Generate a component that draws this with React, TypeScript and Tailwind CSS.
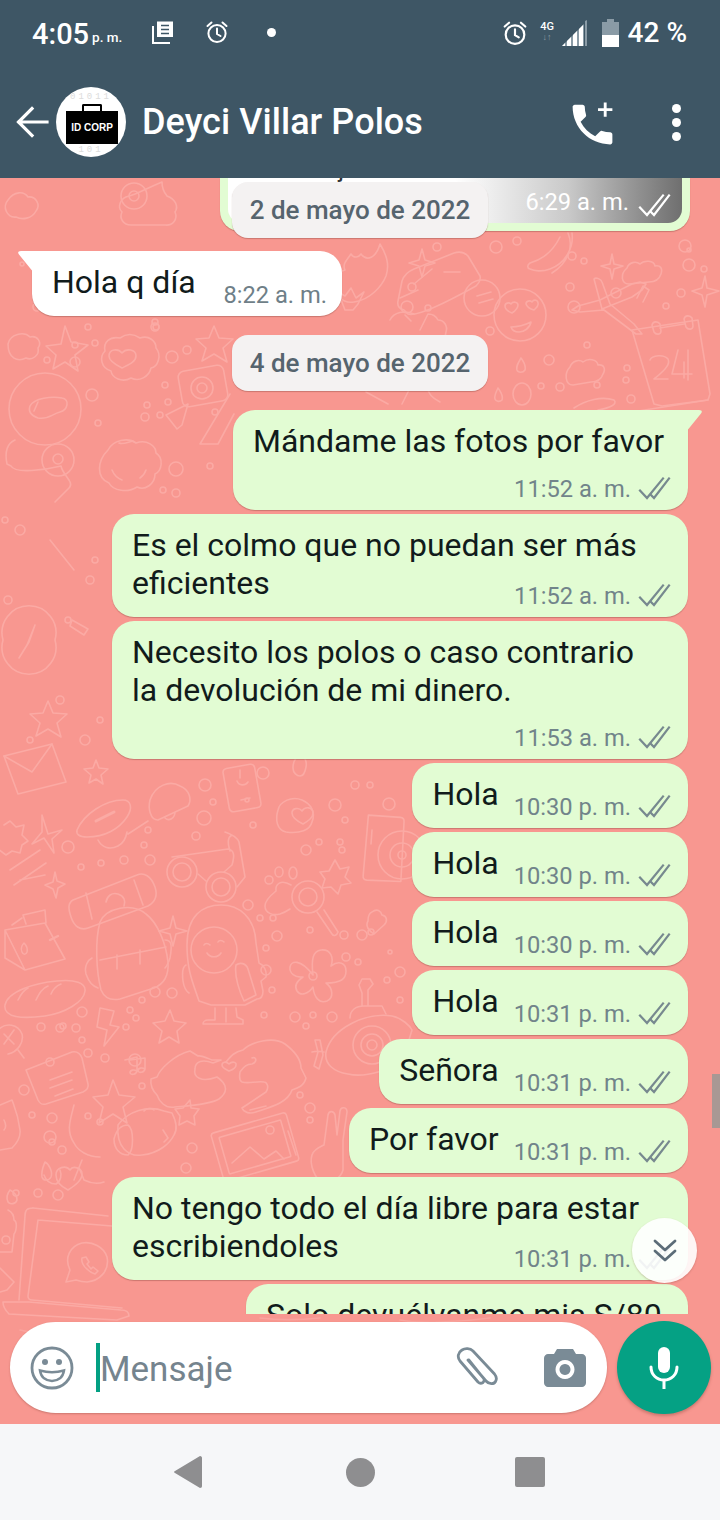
import React from "react";

const dots: [number, number, number][] = [
  [205,785,6],[213,802,3],[204,818,7],[247,800,2],[263,773,6],[253,825,3],[68,847,6],[81,867,3],[101,863,3],[124,860,4],[150,860,5],[148,830,3],[144,845,3],[196,836,4],
  [248,905,5],[260,918,3],[273,918,3],[277,936,5],[310,930,3],[266,948,3],[266,970,5],[272,990,3],[264,1015,3],[295,1017,5],[313,1015,3],[332,1017,5],[306,1026,3],[335,805,6],[370,785,3],[355,785,4],[389,804,6],[345,820,3],[342,850,3],[306,850,5],[319,842,3],[340,842,3],
  [344,935,4],[362,935,5],[371,932,3],[346,957,4],[358,962,3],[390,952,2],[400,972,5],[387,980,3],[400,1000,3],[130,1010,3],[126,1027,3],[142,1000,3],[136,1018,3],[155,992,5],[172,993,5],[82,1012,5],[82,1040,3],[63,1026,3],[41,1027,4],[60,1028,4],[76,1028,4],[50,1062,4],[24,1090,5],[105,1058,4],[88,1053,4],
  [135,1060,6],[142,1086,3],[88,1116,3],[32,1115,3],[52,1118,5],[50,1137,6],[62,1150,4],[300,1095,3],[310,1108,5],[310,1120,3],[192,1148,5],[186,1168,5],[52,1142,3],[100,1122,3],
  [38,1193,4],[58,1195,5],[16,1193,3],
  [22,264,2],[37,307,4],[75,362,5],[95,343,3],[47,360,3],[75,345,3],[88,327,3],[155,327,4],[172,357,6],[187,350,4],[155,322,3],[156,327,3],[92,395,6],[165,385,3],[147,405,3],[168,402,3],[145,417,4],[160,415,3],[98,423,3],[215,412,3],[176,469,7],[210,466,3],[163,490,3],[176,493,4],
  [437,247,4],[496,247,6],[517,241,4],[412,287,4],[407,307,6],[428,308,3],[572,256,4],[584,261,3],[685,246,6],[689,250,2],[689,265,6],[704,269,3],[570,287,4],[574,307,6],[616,293,5],[681,293,4],[666,306,3],[587,345,3],[549,360,5],[627,368,3],[541,386,3],[597,385,3],[626,380,3],[631,399,4],[560,387,4],[490,331,4],
  [5,520,3],[20,530,5],[8,600,4],[68,620,3],[90,580,4],[95,560,3],[60,700,4],[100,720,3],[30,740,3],[85,740,5],
];

function Doodles() {
  return (
    <svg className="absolute left-0 top-0 w-[720px] h-[1246px]" viewBox="0 178 720 1246" fill="none" stroke="#fbaaa4" strokeWidth="1.6" strokeLinecap="round" strokeLinejoin="round">
      {dots.map(([x, y, r], i) => <circle key={i} cx={x} cy={y} r={r} />)}
      <path d="M8 200c6-9 16-9 20-3 8-1 13 8 8 14-4 8-14 9-20 6-9 1-14-10-8-17z" />
      <path d="M162 182c0 8 5 14 5 14 8 3 12 10 8 16 3 7-2 14-10 13h-34c-8 0-12-7-9-13-5-5-2-14 7-16 8-2 14-6 33-14z" />
      <circle cx="134" cy="196" r="13" /><circle cx="134" cy="196" r="5" />
      <path d="M8 344c2-10 16-13 22-7 8-2 12 6 8 11 2 7-6 13-12 10-8 4-18 1-18-14z" />
      <path d="M65 326l6 16 17 3-13 10 3 16-13-9-12 7 3-14-10-9 15-2z" />
      <path d="M120 338c7-5 14-4 20 0 9-3 16 3 16 10 6 7 2 19-5 20-2 9-12 14-20 10-9 5-19 0-20-7-10-3-12-14-6-20-2-9 5-15 15-13z" />
      <path d="M122 368c-6-3-13-7-13-12 0-7 9-8 13-3 4-5 14-4 14 3 0 6-8 9-14 12z" />
      <path d="M214 326l5 12 14 1-10 9 4 14-13-8-12 7 4-13-10-9 13-1z" />
      <rect x="180" y="368" width="46" height="36" rx="6" transform="rotate(-10 203 386)" />
      <circle cx="202" cy="388" r="11" /><circle cx="202" cy="388" r="5" />
      <circle cx="45" cy="409" r="36" />
      <path d="M30 406c4-8 22-10 32-8 8 1 6 12-2 14-8 2-12 8-22 6-6-2-10-6-8-12z" />
      <path d="M38 402l-4 9" />
      <path d="M15 440c-9 4-10 14-8 24l4 2c4 8 34 4 50 0 2 10 14 16 8 22l-14 14" />
      <circle cx="58" cy="460" r="16" /><circle cx="58" cy="459" r="5" />
      <path d="M108 450c5-10 20-13 28-7 11-4 20 3 20 10 8 5 6 18-1 21 0 10-10 17-18 13-9 6-24 4-28-4-13-5-12-22-1-33z" />
      <path d="M119 443c4 2 9-1 14-2M112 470c2 5 5 8 10 10M146 470c-1 3-3 6-6 8" />
      <path d="M166 415l22-11-6 21-5 4z" /><path d="M200 444l30-50M200 444h18l16-30" />
      <path d="M3 640a27 27 0 1 0 52 0 27 27 0 1 0-52 0z" /><path d="M35 625l-6 17-10 16 8-13z" />
      <path d="M6 770l48-12 14 38-48 12z" transform="translate(-2 -14)" /><path d="M4 756l28 16 20-28" />
      <path d="M72 620l16 9-4 6-14-9zM50 540l24 30" />
      <path d="M44 705l5 12 14 1-10 9 4 14-13-8-12 7 4-13-10-9 13-1z" transform="translate(4 -4)" />
      <path d="M96 760l3 8 9 1-7 6 2 9-7-5-7 4 2-8-7-6 9-1z" />
      <path d="M4 825l6-4 6 6 8-2-2 10 6 6-6 4-2 8-8-2-6 4-8-6" />
      <path d="M42 815l6 19 14-4-10 9 2 14-10-15-12 6 10-12z" />
      <path d="M55 872l2 9 8 3-7 4-2 10-3-9-8-4 8-3z" />
      <path d="M10 870l30-20M14 885l32-22M20 880l25-5" />
      <circle cx="182" cy="872" r="15" /><circle cx="182" cy="872" r="9" />
      <circle cx="221" cy="887" r="15" /><circle cx="221" cy="887" r="9" />
      <path d="M172 857l56-8c6 1 7 6 4 16l-8 7M198 874l8 7M225 832c6 2 12 5 14 10l6 35-8 10M230 851c-3-9-2-14 2-16" />
      <path d="M77 830c7-16 28-30 46-30 8 0 10 8 4 17-8 12-22 20-40 20-8 0-11-3-10-7z" />
      <path d="M96 821l18-9" strokeWidth="3" />
      <path d="M98 840c4 8 12 10 20 6 6-3 8-8 9-14M150 800c5-15 20-20 30-14 10 4 12 14 8 20l-30 14c-8 0-10-12-8-20zM175 812c0 6-6 10-10 6M128 834l20-13" />
      <rect x="226" y="766" width="32" height="44" rx="4" transform="rotate(-10 242 788)" />
      <path d="M237 781c2 5 8 5 11 1M240 770v8M241 800l9-2" />
      <path d="M278 810c2-9 14-14 24-10 9 4 14 12 10 22-2 8-12 12-26 10-9-2-11-12-8-22z" />
      <path d="M303 824c-6-3-11-6-11-11 0-5 7-6 10-2 3-5 11-4 11 2 0 5-5 8-10 11z" />
      <path d="M293 768c0-8 4-12 8-12s6 6 5 11c-1 6-3 9-6 9s-7-3-7-8z" />
      <path d="M366 816h32c3 0 4 2 4 4l1 60-34 1c-3 0-4-2-4-4z" transform="rotate(4 380 850)" />
      <circle cx="402" cy="855" r="24" /><circle cx="402" cy="855" r="12" /><circle cx="402" cy="855" r="4" />
      <path d="M372 830l-1 14" />
      <path d="M335 860l5 9 9-2-4 10 6 6-10 2-3 9-7-7-9 1 3-9-5-7 9-1z" />
      <circle cx="308" cy="897" r="16" /><circle cx="308" cy="897" r="9" />
      <path d="M317 912l15 22c2 3 5 1 6-2l-14-22" />
      <path d="M291 885c-10-6-16-1-15 6-5 4-11 9-11 15 0 7 8 10 15 8 3-1 7-3 10-5" />
      <ellipse cx="279" cy="872" rx="4" ry="5" /><ellipse cx="293" cy="873" rx="4" ry="6" /><ellipse cx="269" cy="880" rx="4" ry="4" />
      <path d="M372 912c5-4 9-1 10 3 5 1 6 6 2 10l-10 9c-5-3-9-8-6-13 0-4 1-8 4-9z" />
      <path d="M5 930l40 -7 20 36-40 11zM5 930v28l20 12M45 923l20 36M45 910l-22 5 3 9M45 910l1 13M12 925l10-7" />
      <path d="M22 952c-2-4 1-8 2-9 2 2 4 5 3 9-1 3-4 3-5 0z" /><path d="M50 940l8-4" strokeWidth="2.5" />
      <path d="M73 900l64-25c7-3 14 1 18 12 3 9 0 15-7 19l-60 22c-8 3-14-2-17-11s-3-14 2-17z" />
      <path d="M86 893l6 26M134 880l9 25" />
      <path d="M106 902c1-6 6-10 12-8s8 7 6 12" />
      <path d="M100 922c6-14 32-20 46-8 12 9 20 30 22 48 1 14-4 22-14 26l-34 11c-10 2-16-2-19-9-5-20-6-50-1-68z" />
      <path d="M100 960l66-13M117 955v14M140 950v14M92 958c-4 2-8 8-6 16 2 6 6 12 12 14M165 940c5 0 8 2 5 18-2 6-3 8-5 10" />
      <path d="M173 916l3 12 11 3-11 3-3 12-3-12-11-3 11-3z" />
      <path d="M187 945c0-30 16-40 34-40 18 0 34 12 35 38l3 20c5 2 8 8 7 14l-5 4 2 10c0 6-2 8-6 8l-12 6h-34l-12-4c-6-18-12-30-12-56z" />
      <circle cx="214" cy="950" r="23" />
      <path d="M204 945c1-2 4-2 6 0M218 942c1-2 4-2 6 0M207 953c3 5 11 5 14 0" />
      <path d="M236 965c4-3 10-2 12 4l8 26-12 6c-4-8-10-25-8-36zM186 965c-4 2-4 8-3 16 1 7 3 10 6 12M215 1008v12h-7c-3 0-5 2-5 4h40v-4l-6-3-1-9M226 1008v14" />
      <path d="M313 975c-2-16 0-24 8-25 10-1 13 8 10 16 8-6 15-3 15 5s-5 12-20 12c7 5 8 15 1 18-8 3-13-4-14-14-4 6-12 10-16 4-3-5 0-10 6-14-8 1-14-4-13-10s10-9 23 8z" />
      <circle cx="313" cy="976" r="4" />
      <path d="M326 1052c6-24 40-40 66-36 10 2 18 10 20 14l-8 26c-8 14-40 22-56 18-14-2-24-10-22-22z" />
      <circle cx="372" cy="1045" r="19" /><circle cx="372" cy="1045" r="11" /><circle cx="372" cy="1045" r="5" />
      <path d="M350 1018c0-8 6-12 14-12h18l4 8M362 1005v-12l-3-8 3-6h8l3 5-5 6 0 16M315 1040l3 12-4 14 5 3 4-14-3-15zM312 1052c4-1 8-1 12 0" />
      <path d="M5 1005c3-14 30-22 52-24 18-2 29 2 28 10-1 11-20 22-40 25-22 3-42 2-40-11z" />
      <path d="M18 1000c3-6 6-10 10-12M36 1000c3-6 6-12 12-14M51 994c2-5 5-8 10-10" />
      <path d="M100 1008l14 3-4 14 9 2-15 19 3-16-10-3z" />
      <path d="M170 1010l4 11 12 2-9 8 2 12-10-6-10 6 3-12-9-8 12-2z" />
      <path d="M125 1060l12-3v14c-1 4-6 4-7 2 0-3 4-4 7-2M130 1060l15-2v11c-1 4-6 4-7 2 0-3 4-4 7-2" />
      <path d="M-2 1030c8-8 20-6 24 4 2 8-4 18-14 20" /><path d="M4 1044l10-14M4 1034l10 10M18 1050l6 8" />
      <path d="M26 1070l46-18c5-1 8 1 10 6l6 26c1 4-1 6-5 8l-37 12c-4 1-6 0-8-4z" />
      <path d="M50 1080l22-8M50 1088l22-8M55 1096l18-7" />
      <path d="M113 1080l6 15 16 2-12 10 4 16-14-9-14 9 4-16-10-10 15-2z" />
      <path d="M212 1060c-5-2-11-5-14-4l-8-5c-16 4-30 18-33 26l-6 2c-1 7 2 12 6 16 2 6 8 14 18 12 10-1 34-2 44-8 8-6 10-14-2-22-16 6-24 0-22-8 0-8 8-10 18-6l8-3z" />
      <path d="M226 1062c5-6 8-10 17-12 8-8 30-14 42-6 8 6 16 14 16 24l5 10c-2 8-8 10-14 12-4 12-18 16-36 22-6 2-12 1-14-4l24-16c4-6 0-10-2-10-8-1-16 2-22 0-4-2-2-8-2-10 4-5 6-8 12-8 6-2 4-8 0-6" />
      <path d="M229 1071c-4-2-7-3-7-6 0-3 4-4 7-1 3-3 8-2 7 1 0 3-4 5-7 6z" />
      <path d="M312 1155c2-6 8-8 12-10l4-30c1-5 6-4 7 0l2 20 3-24c1-5 7-4 7 1l-4 28v30c-2 8-12 14-20 12-8-2-14-18-11-27z" />
      <path d="M118 1125c10-14 30-20 46-14l8 2c4 8 6 16 2 22-4 8-14 18-32 20-14 2-26-8-24-30z" />
      <path d="M128 1125c-8 0-12 6-14 14 0 10 6 16 14 16 6-4 6-26 0-30zM144 1111c2-3 8-3 10-1M163 1130l5 8-4 4" />
      <path d="M74 1105c-4 16-8 26 0 38 4 8 14 14 26 14M82 1160l-8 20" />
      <path d="M190 1100l-7 8-8 1 5 7-1 9 8-4 8 4-1-9 5-7-8-1z" />
      <rect x="216" y="1122" width="78" height="50" rx="3" transform="rotate(-16 255 1147)" />
      <rect x="223" y="1128" width="64" height="38" rx="1" transform="rotate(-16 255 1147)" />
      <path d="M232 1163l18-16 14 12 12-8 8 8M250 1110l16-4M288 1131l8 24" />
      <circle cx="270" cy="1130" r="4" />
      <path d="M45 1162c4 2 8 10 6 15-2 4-8 4-9 0-1-6 1-10 3-15zM56 1175c0-8 10-10 14-5 3-5 12-2 12 4 0 7-8 12-14 16-6-3-12-8-12-15z" />
      <path d="M0 1105l12-5c3 8 6 14 8 30 1 8-4 14-8 18l-12 2M4 1120c2 4 2 8 0 10" />
      <path d="M33 1208l75 8" /><path d="M33 1208c-6 0-8 2-8 8l-6 84" />
      <path d="M38 1220l74 6M38 1220l-10 76c0 3 1 4 4 4l90 8" />
      <path d="M3 1302l26 0 92 8c6 0 8 2 8 6l-12 4-108-6c-4-4-6-8-6-12z" />
      <path d="M70 1270c-6-12 0-24 12-27 10-2 22 4 25 14 3 14-8 24-20 25-4 0-8-1-11-2l-10 2z" />
      <path d="M82 1258c-1 4 2 9 5 11 2 2 4 4 8 5l3-3-5-4-2 2-4-5 2-2-3-5z" />
      <path d="M8 1210c4 2 6 6 6 10 4 2 2 12 0 14l-2 18-12 0M0 1268l8 8 6 6-7 8-7 2" />
      <path d="M10 1190c-3 4-4 8-2 12 2 3 8 2 9-2 0-4-3-8-7-10zM44 1175c2 6 6 9 12 9 5-3 6-9 4-14M80 1170l4 10c8 4 14 4 20 2" />
      <path d="M20 1330c20 6 40 0 60 2M120 1325c10-4 30-2 40 2M260 1318c16 2 40 2 60 0M400 1320c20 4 60 2 90-2" opacity=".7" />
      <circle cx="6" cy="1240" r="4" />
      <path d="M345 270c-3-6 2-10 6-16 3 5 8 3 10 0 6 8 15 4 19-10 6 10 10 20 6 32-4 10-16 24-32 26-12 2-20-8-22-20-2-8 6-10 13-12z" />
      <path d="M345 310l-7-18 7 4 6-8 5 10 8-6-6 12-5 6z" />
      <path d="M422 249l3 11 10 3-10 3-3 11-3-11-10-3 10-3z" />
      <path d="M454 253l-40 16c-5 2-10 6-12 12l-4 20c-1 5 2 8 6 9l4 4c10 4 50-18 68-28 3-3 5-6 4-10l-12-20c-3-3-8-5-14-3z" />
      <path d="M414 284l18-15M400 298l18-8M444 272h16" />
      <circle cx="482" cy="298" r="18" />
      <path d="M477 296l14-4M479 303l14-4" />
      <path d="M572 233c2 14-6 30-22 36-8 3-16 2-20 0-3-1-3-4 0-6 6-2 20-6 30-26M568 233c6 14 0 30-16 40" />
      <path d="M612 254l2 10 9 2-9 3-2 10-2-10-9-3 9-2z" />
      <path d="M627 268c2-6 9-7 13-4 4-4 14-4 15 2 5-1 8 2 6 8-2 6-6 8-12 8l-20 2c-8 0-9-10-2-16z" />
      <circle cx="520" cy="315" r="26" />
      <path d="M512 313c-5-2-7-5-7-7 0-3 4-4 6-2 2-3 7-2 7 1 0 3-3 6-6 8zM534 310c-4-1-7-3-8-6 0-3 4-4 6-2 2-3 6-2 6 1 1 3-2 5-4 7zM511 327c6 0 14-2 20-5-1 6-7 10-12 10-4 0-7-2-8-5z" />
      <path d="M594 279l8 30 30-12 10-7 4-6-6-2-8 2-32 16-22 6-6 4 8 2 24-2 32 24 6 0-8-10-24-20-8-22c-1-3-6-5-8-3z" />
      <path d="M637 298l6-12 6 4-6 12" />
      <path d="M665 266l2 12 12 3-12 4-2 12-3-12-10-4 10-3z" transform="translate(40 10)" />
      <path d="M632 330l66-10 12 74-2 6-46 6-8-2z" />
      <path d="M652 325c1-4 6-4 8-1l1 7c0 4-5 4-7 1zM684 319c1-4 6-4 8-1l1 8c0 4-5 4-7 1zM660 328l24-4" />
      <path d="M650 360c2-5 14-6 18-1 2 4 0 9-14 20h14M678 350l-6 24h20M688 350v30M684 362v16" />
      <path d="M570 367c2-6 9-8 13-5 5-4 14-3 15 3 6-1 8 4 5 9-2 6-6 8-12 8l-18 3c-8 0-9-12-3-18z" />
      <path d="M521 358c-3 5-5 8-4 12 1 3 6 3 8 0 1-4-1-8-4-12zM498 388c-2 4-4 8-3 11 1 3 5 3 7 1 1-3-1-8-4-12z" />
      <ellipse cx="522" cy="394" rx="9" ry="11" />
      <path d="M574 408c12-8 28-12 40-8 4 4-4 8-16 10" />
      <path d="M632 412l76-12" />
      <path d="M420 330l8-16c4 0 8 2 10 6 6 0 10 6 8 12l-2 10 6 4-8 14c-4 2-8 20-10 30" />
      <path d="M390 320c4-8 14-10 24-6M405 315l6 6" />
      <path d="M388 404l-22-12M402 404l8-16M440 402c-8-4-12-8-12-14" />
    </svg>
  );
}

function Checks({ className = "" }: { className?: string }) {
  return (
    <svg className={className} width="33" height="24" viewBox="0 0 33 24" fill="none" stroke="currentColor" strokeWidth="2.2" strokeLinecap="square">
      <path d="M2 14.5l7 7.5L25 2.5" />
      <path d="M13 19l3 3L31 2.5" />
    </svg>
  );
}

function Meta({ time, className = "" }: { time: string; className?: string }) {
  return (
    <div className={"flex h-[30px] items-center shrink-0 whitespace-nowrap text-[23.7px] leading-[30px] text-[#71848a] " + className}>
      <span className="pt-[1px]">{time}</span>
      <Checks className="ml-[7px] text-[#77898f]" />
    </div>
  );
}

function Short({ text, time }: { text: string; time: string }) {
  return (
    <div className="flex h-[65px] w-fit shrink-0 rounded-[22px] bg-[#e2fcd3] pl-[20px] pr-[17px] shadow-[0_1px_1px_rgba(120,60,50,0.35)]">
      <div className="pt-[12px] text-[32px] leading-[38px] text-[#111b1b] whitespace-nowrap">{text}</div>
      <Meta time={time} className="self-end mb-[7px] ml-[15px]" />
    </div>
  );
}

function Long({ lines, time, w, mt }: { lines: string[]; time: string; w: string; mt: string }) {
  return (
    <div className={"shrink-0 rounded-[22px] bg-[#e2fcd3] pl-[20px] pr-[17px] pt-[12px] pb-[7px] shadow-[0_1px_1px_rgba(120,60,50,0.35)] " + w}>
      <div className="text-[32px] leading-[38px] text-[#111b1b] whitespace-nowrap">
        {lines.map((l) => <div key={l}>{l}</div>)}
      </div>
      <div className={"flex justify-end " + mt}><Meta time={time} /></div>
    </div>
  );
}

function Chip({ label, className = "" }: { label: string; className?: string }) {
  return (
    <div className={"flex h-[56px] w-[256px] shrink-0 items-center justify-center rounded-[16px] bg-[#f4f2f2] pt-[1px] text-[26px] font-medium text-[#56646e] shadow-[0_1px_1px_rgba(120,60,50,0.35)] " + className}>
      {label}
    </div>
  );
}

function StatusBar() {
  return (
    <div className="flex h-[66px] items-center pl-[32px] pr-[33px] text-white">
      <span className="text-[29px] font-medium leading-none mt-[2px]">4:05</span>
      <span className="ml-[3px] mt-[9px] text-[13.5px] font-medium leading-none">p. m.</span>
      <svg className="ml-[29px] mt-[-2px]" width="24" height="24" viewBox="0 0 24 24" fill="none" stroke="white" strokeWidth="2">
        <path d="M6 1.500h16V17H6z" fill="white" stroke="none" />
        <path d="M10 5.500h8M10 9.500h8M10 13.500h8" stroke="#3e5665" strokeWidth="1.700" />
        <path d="M2 6v17h17" strokeWidth="2" />
      </svg>
      <svg className="ml-[30px] mt-[-2px]" width="24" height="24" viewBox="0 0 24 24" fill="none" stroke="white" strokeWidth="2" strokeLinecap="round">
        <circle cx="12" cy="13.500" r="8.600" /><path d="M12 8.500v5.500l3.500 2M2.500 6l4-3.500M21.500 6l-4-3.500" />
      </svg>
      <span className="ml-[38px] mt-[-2px] h-[9px] w-[9px] rounded-full bg-white" />
      <div className="flex-1" />
      <svg width="26" height="26" viewBox="0 0 24 24" fill="none" stroke="white" strokeWidth="2" strokeLinecap="round">
        <circle cx="12" cy="13.500" r="8.600" /><path d="M12 8.500v5.500l3.500 2M2.500 6l4-3.500M21.500 6l-4-3.500" />
      </svg>
      <div className="ml-[12px] mb-[2px] flex w-[15px] flex-col items-center">
        <span className="text-[11px] leading-[11px] font-medium">4G</span>
        <span className="text-[9px] leading-[11px] text-[#8a9aa4]">↓↑</span>
      </div>
      <svg className="ml-[6px]" width="27" height="28" viewBox="0 0 27 28">
        <path d="M1 27L23 5v22z" fill="#8a9ba6" />
        <path d="M26 1v26h-2V2z" fill="#8a9ba6" />
        <path d="M1 27l3-3v3zM6 22l4-4v9H6zM12 16l4-4v15h-4zM18 10l4-4v21h-4z" fill="white" />
      </svg>
      <svg className="ml-[13px]" width="19" height="28" viewBox="0 0 19 28">
        <path d="M6 0h7v3h5v25H1V3h5z" fill="#8a9ba6" />
        <path d="M1 16h17v12H1z" fill="white" />
      </svg>
      <span className="ml-[8px] text-[28px] font-medium leading-none">42 %</span>
    </div>
  );
}

function AppBar() {
  return (
    <div className="flex h-[112px] items-center pl-[16px] text-white">
      <svg width="34" height="34" viewBox="0 0 34 34" fill="none" stroke="white" strokeWidth="3.200" strokeLinecap="square" strokeLinejoin="miter">
        <path d="M31 17H3M16 3.500L2.500 17 16 30.500" />
      </svg>
      <div className="relative ml-[6px] h-[70px] w-[70px] shrink-0 overflow-hidden rounded-full bg-white">
        <div className="pt-[5px] text-center text-[9px] leading-[10px] tracking-[3px] text-[#dcdcdc] font-['Liberation_Mono']">01011</div>
        <div className="absolute bottom-[2px] left-0 w-full text-center text-[9px] leading-[10px] tracking-[3px] text-[#dcdcdc] font-['Liberation_Mono']">101</div>
        <div className="absolute left-[10px] top-[24px] flex h-[33px] w-[52px] items-center justify-center bg-black text-[10px] font-bold leading-none text-white font-['Liberation_Sans']" >ID CORP</div>
        <div className="absolute left-[26px] top-[17px] h-[8px] w-[20px] rounded-t-[2px] border-[2.500px] border-b-0 border-black" />
      </div>
      <div className="ml-[16px] text-[36px] font-medium leading-none mb-[1px] tracking-[0.05px]">Deyci Villar Polos</div>
      <div className="flex-1" />
      <svg className="mt-[5px]" width="53" height="53" viewBox="0 0 24 24" fill="white">
        <path d="M20 15.500c-1.250 0-2.450-.2-3.570-.57-.35-.11-.74-.03-1.020.24l-2.200 2.200c-2.830-1.440-5.150-3.750-6.590-6.590l2.200-2.210c.28-.26.36-.65.25-1C8.700 6.450 8.500 5.250 8.500 4c0-.55-.45-1-1-1H4c-.55 0-1 .45-1 1 0 9.390 7.610 17 17 17 .55 0 1-.45 1-1v-3.500c0-.55-.45-1-1-1z" />
        <path d="M21 4.600h-2.600V2h-1.300v2.600h-2.600v1.300h2.600v2.600h1.300V5.900h2.600z" />
      </svg>
      <div className="ml-[53px] mr-[39px] flex flex-col gap-[5px]">
        <span className="h-[9px] w-[9px] rounded-full bg-white" />
        <span className="h-[9px] w-[9px] rounded-full bg-white" />
        <span className="h-[9px] w-[9px] rounded-full bg-white" />
      </div>
    </div>
  );
}

function Messages() {
  return (
    <div className="relative flex h-[1136px] flex-col items-end gap-[4px] overflow-hidden pr-[32px]">
      <div className="mr-[-2px] h-[53px] w-[470px] shrink-0 overflow-hidden rounded-b-[20px] bg-[#e2fcd3] px-[8px] pb-[8px] shadow-[0_1px_1px_rgba(120,60,50,0.35)]">
        <div className="relative flex h-[45px] items-end justify-end overflow-hidden rounded-b-[14px] bg-gradient-to-r from-white from-[50%] via-[#c9c9c9] via-[75%] to-[#6f6f6f] pb-[6px] pr-[11px]">
          <span className="absolute left-[50px] top-[-21px] text-[20px] font-medium leading-[28px] text-[#333]">Mensaje</span>
          <span className="text-[23.700px] leading-[30px] text-white">6:29 a. m.</span>
          <Checks className="ml-[9px] text-white" />
        </div>
      </div>

      <div className="relative ml-[32px] mt-[16px] flex h-[65px] w-[310px] shrink-0 justify-between self-start rounded-[22px] rounded-tl-none bg-white pl-[20px] pr-[15px] shadow-[0_1px_1px_rgba(120,60,50,0.35)]">
        <svg className="absolute left-[-14px] top-0" width="16" height="22" viewBox="0 0 16 22" fill="white"><path d="M16 0H3C0 0-.5 2 1 3.500L16 22z" /></svg>
        <div className="pt-[12px] text-[32px] leading-[38px] text-[#111b1b]">Hola q día</div>
        <div className="mb-[7px] h-[30px] self-end pt-[1px] text-[23.700px] leading-[30px] text-[#6f7f88]">8:22 a. m.</div>
      </div>

      <Chip label="4 de mayo de 2022" className="ml-[32px] mt-[15px] self-center" />

      <div className="relative mt-[15px] shrink-0">
        <svg className="absolute right-[-14px] top-0 z-10" width="16" height="22" viewBox="0 0 16 22" fill="#e2fcd3"><path d="M0 0h13c3 0 3.500 2 2 3.500L0 22z" /></svg>
        <div className="w-[455px] rounded-[22px] rounded-tr-none bg-[#e2fcd3] pb-[7px] pl-[20px] pr-[17px] pt-[12px] shadow-[0_1px_1px_rgba(120,60,50,0.35)]">
          <div className="whitespace-nowrap text-[32px] leading-[38px] text-[#111b1b]">Mándame las fotos por favor</div>
          <div className="mt-[13px] flex justify-end"><Meta time="11:52 a. m." /></div>
        </div>
      </div>

      <Long lines={["Es el colmo que no puedan ser más", "eficientes"]} time="11:52 a. m." w="w-[576px]" mt="-mt-[22px]" />
      <Long lines={["Necesito los polos o caso contrario", "la devolución de mi dinero."]} time="11:53 a. m." w="w-[576px]" mt="mt-[13px]" />
      <Short text="Hola" time="10:30 p. m." />
      <Short text="Hola" time="10:30 p. m." />
      <Short text="Hola" time="10:30 p. m." />
      <Short text="Hola" time="10:31 p. m." />
      <Short text="Señora" time="10:31 p. m." />
      <Short text="Por favor" time="10:31 p. m." />
      <Long lines={["No tengo todo el día libre para estar", "escribiendoles"]} time="10:31 p. m." w="w-[576px]" mt="-mt-[22px]" />
      <Long lines={["Solo devuélvanme mis S/80"]} time="10:31 p. m." w="w-[442px]" mt="mt-[13px]" />

      <Chip label="2 de mayo de 2022" className="absolute left-[232px] top-[4px] h-[54px]" />
      <div className="absolute left-[632px] top-[1040px] flex h-[65px] w-[65px] items-center justify-center rounded-full bg-white/90 shadow-[0_1px_2px_rgba(120,60,50,0.3)]">
        <svg width="30" height="30" viewBox="0 0 30 30" fill="none" stroke="#5c6d78" strokeWidth="2.800" strokeLinecap="round" strokeLinejoin="round"><path d="M5 5l10 9 10-9M5 15l10 9 10-9" /></svg>
      </div>
      <div className="absolute right-0 top-[896px] h-[54px] w-[8px] bg-[#a89894]" />
    </div>
  );
}

function InputBar() {
  return (
    <div className="flex h-[110px] items-start pl-[10px] pr-[9px] pt-[8px]">
      <div className="flex h-[91px] w-[597px] items-center rounded-full bg-white pl-[20px] pr-[21px] shadow-[0_1px_2px_rgba(120,60,50,0.35)]">
        <svg width="44" height="44" viewBox="0 0 44 44" fill="none" stroke="#7a8b96" strokeWidth="2.800">
          <circle cx="22" cy="22" r="20" />
          <circle cx="15" cy="16" r="3" fill="#7a8b96" stroke="none" />
          <circle cx="29" cy="16" r="3" fill="#7a8b96" stroke="none" />
          <path d="M10 24.500c7 2 17 2 24 0-1 7-6 10.500-12 10.500s-11-3.500-12-10.500z" strokeWidth="2.500" />
        </svg>
        <div className="ml-[22px] h-[49px] w-[4px] bg-[#03a083]" />
        <span className="pt-[3px] text-[35px] leading-none text-[#75848e]">Mensaje</span>
        <div className="flex-1" />
        <svg width="44" height="42" viewBox="0 0 44 42" fill="none" stroke="#7a8b96" strokeWidth="2.800" strokeLinecap="round" strokeLinejoin="round">
          <path d="M14 13l18 21c3 3.500 8 3.500 9.500.5 1.500-2.500 1-5-1-7.500L19 4C16 1 11 1 8 3c-4 2.500-5 7-2 11l18 21c1.500 1.500 3.500 1.500 5 .5 1.500-1.500 1.500-3.500 0-5L15 13" />
        </svg>
        <svg className="ml-[46px]" width="42" height="38" viewBox="0 0 42 38">
          <path fillRule="evenodd" d="M13 0h16l3 5h6c2 0 4 2 4 4v25c0 2-2 4-4 4H4c-2 0-4-2-4-4V9c0-2 2-4 4-4h6zM21 11a9.500 9.500 0 1 0 .01 0zM21 15a5.500 5.500 0 1 1-.01 0z" fill="#7a8b96" />
        </svg>
      </div>
      <div className="-mt-[1px] ml-[10px] flex h-[93px] w-[94px] items-center justify-center rounded-full bg-[#05a184] shadow-[0_2px_3px_rgba(120,60,50,0.35)]">
        <svg width="30" height="42" viewBox="0 0 30 42" fill="white">
          <rect x="9" y="0" width="12" height="26" rx="6" />
          <path d="M2 20c0 8 6 13 13 13s13-5 13-13" fill="none" stroke="white" strokeWidth="3" strokeLinecap="round" />
          <rect x="13.500" y="32" width="3" height="10" />
        </svg>
      </div>
    </div>
  );
}

function NavBar() {
  return (
    <div className="flex h-[96px] items-center bg-[#f6f7f9] pl-[174px]">
      <svg width="28" height="32" viewBox="0 0 28 32"><path d="M26 0c1.500 0 2 1 2 2v28c0 1-.5 2-2 2L1 17c-1.300-.7-1.300-1.500 0-2z" fill="#8e8e90" /></svg>
      <div className="ml-[144px] h-[29px] w-[29px] rounded-full bg-[#8e8e90]" />
      <div className="ml-[140px] h-[30px] w-[30px] rounded-[2px] bg-[#8e8e90]" />
    </div>
  );
}

export default function App() {
  return (
    <div className="flex h-[1520px] w-[720px] flex-col overflow-hidden font-['Roboto',sans-serif]">
      <header className="h-[178px] shrink-0 bg-[#3e5665]">
        <StatusBar />
        <AppBar />
      </header>
      <main className="relative h-[1246px] shrink-0 bg-[#f89790]">
        <Doodles />
        <div className="relative">
          <Messages />
          <InputBar />
        </div>
      </main>
      <NavBar />
    </div>
  );
}
